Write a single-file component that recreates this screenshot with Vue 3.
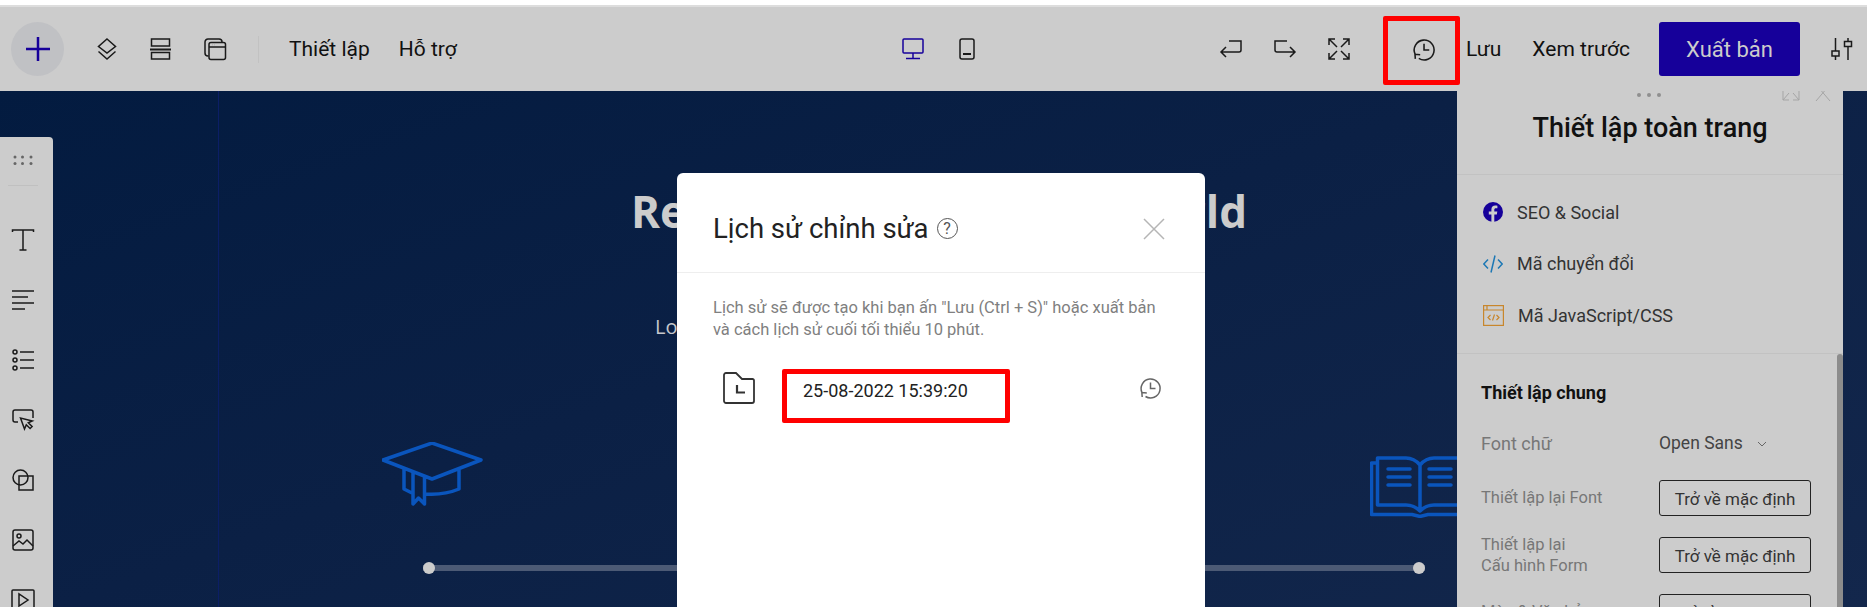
<template>
  <div class="page">
    <header class="toolbar">
      <button class="add-btn" aria-label="Thêm">
        <svg width="26" height="26" viewBox="0 0 26 26"><path d="M13 1v24M1 13h24" class="add-plus" /></svg>
      </button>
      <div class="tool-icons">
        <svg class="ico" viewBox="0 0 22 22"><path d="M11 1l8.500 7.500L11 15 2.500 8.500zM2.500 13.500L11 21l8.500-7.500" /></svg>
        <svg class="ico" viewBox="0 0 22 22"><rect x="1.500" y="1" width="18" height="7" /><path d="M0 11.500h21" stroke-width="2" /><rect x="1.500" y="14.500" width="18" height="6.500" /></svg>
        <svg class="ico" viewBox="0 0 22 22">
          <path d="M4.500 18H4a3 3 0 0 1-3-3V4a3 3 0 0 1 3-3h11a3 3 0 0 1 3 3v.5" />
          <rect x="5" y="4.500" width="16.500" height="17" rx="2" />
          <path d="M5 9h16.500M8 6.800h.1M10.500 6.800h.1" />
        </svg>
      </div>
      <span class="divider"></span>
      <nav class="menu">
        <a>Thiết lập</a>
        <a>Hỗ trợ</a>
      </nav>
      <div class="devices">
        <svg class="ico active" viewBox="0 0 22 22"><rect x="1" y="1" width="20" height="14" rx="1" /><path d="M11 15v5M4 20.500h14" /></svg>
        <svg class="ico tablet" viewBox="0 0 16 22"><rect x="1" y="1" width="14" height="20" rx="2" /><path d="M4 16h8" stroke-width="2" /></svg>
      </div>
      <div class="actions">
        <svg class="ico" viewBox="0 0 22 22"><path d="M9 3h12v9a2 2 0 0 1-2 2H1M6 9l-5 5 5 5" /></svg>
        <svg class="ico" viewBox="0 0 22 22"><path d="M13 3H1v9a2 2 0 0 0 2 2h18M16 9l5 5-5 5" /></svg>
        <svg class="ico" viewBox="0 0 22 22"><path d="M1 7V1h6M1 1l8 8M15 1h6v6M21 1l-8 8M1 15v6h6M1 21l8-8M15 21h6v-6M21 21l-8-8" /></svg>
        <svg class="ico history" viewBox="0 0 22 22"><path d="M3 15.500A9.500 9.500 0 1 1 6.500 19.500M2.800 15l.4 5M2.800 15.500l5 .5M11.500 5.500v6h5" /></svg>
        <a class="save">Lưu</a>
        <a class="preview">Xem trước</a>
        <button class="publish">Xuất bản</button>
        <svg class="ico sliders" viewBox="0 0 22 22"><path d="M4.500 0v13M4.500 18v4M17 0v3.500M17 8.500V22" /><rect x="1" y="13" width="7" height="5" /><rect x="13.500" y="3.500" width="7" height="5" /></svg>
      </div>
      <span class="mark mark-history"></span>
    </header>

    <main class="canvas">
      <span class="guide"></span>

      <section class="hero">
        <h1>Reasons to join the world</h1>
        <p>Lorem ipsum dolor sit amet, consectetur adipiscing elit</p>
        <div class="milestones">
          <svg class="cap" width="102" height="66" viewBox="0 0 102 66">
            <path d="M1 18L50 1l49 17-49 19zM22 27v20l8 4M31 30v32l5.500-6 6 6V35M77 27v20c-12 5-22 6-34 5" />
          </svg>
          <svg class="book" width="100" height="62" viewBox="0 0 100 62">
            <path d="M7 7H1.500v51.500H42l8 2 8-2h40.500V7H93" />
            <path d="M50 9Q44 2 36 2H7.500v47H36q8 0 14 6 6-6 14-6h28.500V2H64q-8 0-14 7zM50 9v46" />
            <path d="M18 13h22M18 21h22M18 29h22M59 13h22M59 21h22M59 29h22" />
          </svg>
        </div>
        <div class="timeline">
          <span class="dot"></span>
          <span class="dot"></span>
        </div>
      </section>

      <aside class="widgets">
        <svg class="grip" width="20" height="10" viewBox="0 0 20 10"><g fill="#666"><circle cx="2" cy="2" r="1.500" /><circle cx="9.500" cy="2" r="1.500" /><circle cx="18" cy="2" r="1.500" /><circle cx="2" cy="8.500" r="1.500" /><circle cx="9.500" cy="8.500" r="1.500" /><circle cx="18" cy="8.500" r="1.500" /></g></svg>
        <span class="widgets-line"></span>
        <div class="widget-list">
          <svg class="ico" viewBox="0 0 22 22"><path d="M.5 3V1h21v2M11 1v20M7.500 21h7" /></svg>
          <svg class="ico" viewBox="0 0 22 22"><path d="M0 2h22M0 8h16M0 14h22M0 20h13" /></svg>
          <svg class="ico" viewBox="0 0 22 22"><circle cx="3" cy="3" r="2" /><circle cx="3" cy="11" r="2" /><circle cx="3" cy="19" r="2" /><path d="M8 3h14M8 11h14M8 19h14" /></svg>
          <svg class="ico" viewBox="0 0 22 22"><path d="M6 13H3a2 2 0 0 1-2-2V3a2 2 0 0 1 2-2h16a2 2 0 0 1 2 2v6" /><path d="M8.500 9l4 11 1.800-4.200 3.800 3.700 2-2-3.800-3.700 4-1.800z" /></svg>
          <svg class="ico" viewBox="0 0 22 22"><circle cx="8.500" cy="8.500" r="7.500" /><rect x="7" y="7" width="14" height="14" /></svg>
          <svg class="ico" viewBox="0 0 22 22"><rect x="1" y="1" width="20" height="20" rx="2" /><circle cx="7" cy="7" r="2" /><path d="M1 17l6-5 4 3 4-4 6 6" /></svg>
          <svg class="ico video" viewBox="0 0 24 22"><rect x="1" y="1" width="22" height="20" rx="1" /><path d="M8 5v12l9-6z" /></svg>
        </div>
      </aside>

      <aside class="settings">
        <div class="settings-head">
          <svg class="settings-dots" width="24" height="4" viewBox="0 0 24 4"><g fill="#8f8f8f"><circle cx="2" cy="2" r="2" /><circle cx="12" cy="2" r="2" /><circle cx="22" cy="2" r="2" /></g></svg>
          <svg class="settings-collapse" width="18" height="10" viewBox="0 0 18 10"><path d="M1 0v9h6M1 9l6-7M17 0v9h-6M17 9l-6-7" /></svg>
          <svg class="settings-close" width="16" height="10" viewBox="0 0 16 10"><path d="M1 10L9.500 0M15 10L6.500 0" /></svg>
          <h2>Thiết lập toàn trang</h2>
        </div>
        <ul class="settings-links">
          <li>
            <svg width="20" height="20" viewBox="0 0 20 20"><circle cx="10" cy="10" r="10" fill="#16009a" /><path d="M11.300 20v-7.500h2.500l.5-3h-3V7.800c0-.9.400-1.500 1.600-1.500h1.500V3.700c-.5-.1-1.300-.2-2.200-.2-2.300 0-3.800 1.400-3.800 3.900v2.100H5.800v3h2.600V20z" fill="#ccc" /></svg>
            SEO &amp; Social
          </li>
          <li>
            <svg width="20" height="20" viewBox="0 0 20 20" fill="none" stroke="#1d78b5" stroke-width="1.500"><path d="M5 5.500L.8 10 5 14.500M15 5.500l4.200 4.500-4.200 4.500M12 1.500L8 18.500" /></svg>
            Mã chuyển đổi
          </li>
          <li>
            <svg width="21" height="21" viewBox="0 0 21 21" fill="none" stroke="#c8862c" stroke-width="1.200"><rect x=".6" y=".6" width="19.800" height="19.800" /><path d="M.6 5h19.800M4 .6V5M7.500 10l-2.500 2.500L7.500 15M13.500 10l2.500 2.500-2.500 2.500M11.500 9.500l-2 6" /></svg>
            Mã JavaScript/CSS
          </li>
        </ul>
        <section class="settings-general">
          <span class="scrollbar"></span>
          <h3>Thiết lập chung</h3>
          <div class="field field-font">
            <label>Font chữ</label>
            <div class="select">
              Open Sans
              <svg width="10" height="6" viewBox="0 0 10 6" fill="none" stroke="#666"><path d="M1 1l4 4 4-4" /></svg>
            </div>
          </div>
          <div class="field" v-for="row in resets" :key="row.id">
            <label>{{ row.first }}<br v-if="row.second" />{{ row.second }}</label>
            <button class="reset">{{ row.action }}</button>
          </div>
        </section>
      </aside>

      <div class="modal">
        <div class="modal-head">
          <h2>Lịch sử chỉnh sửa</h2>
          <span class="help">?</span>
          <svg class="modal-close" width="22" height="22" viewBox="0 0 22 22"><path d="M1 1l20 20M21 1L1 21" /></svg>
        </div>
        <div class="modal-body">
          <p>Lịch sử sẽ được tạo khi bạn ấn "Lưu (Ctrl + S)" hoặc xuất bản<br />và cách lịch sử cuối tối thiểu 10 phút.</p>
          <div class="version">
            <svg class="folder" width="32" height="32" viewBox="0 0 32 32"><path d="M1 3a2 2 0 0 1 2-2h10l6 6h10.500a1.500 1.500 0 0 1 1.500 1.500V29a2 2 0 0 1-2 2H3a2 2 0 0 1-2-2z" /><path d="M14 13v7.500h8" stroke-width="2.200" /></svg>
            <span class="version-date">25-08-2022 15:39:20</span>
            <svg class="ico restore" viewBox="0 0 22 22"><path d="M3 15.500A9.500 9.500 0 1 1 6.500 19.500M2.800 15l.4 5M2.800 15.500l5 .5M11.500 5.500v6h5" /></svg>
          </div>
        </div>
      </div>
    </main>
  </div>
</template>

<script setup>
const resets = [
  { id: 1, first: 'Thiết lập lại Font', second: '', action: 'Trở về mặc định' },
  { id: 2, first: 'Thiết lập lại', second: 'Cấu hình Form', action: 'Trở về mặc định' },
  { id: 3, first: 'Màu & Văn bản', second: '', action: 'Trở về mặc định' },
];
</script>

<style>
html,
body {
  margin: 0;
  background: #fff;
  overflow: hidden;
}
</style>

<style scoped>
.page {
  height: 607px;
  overflow: hidden;
  display: flex;
  flex-direction: column;
  padding-top: 5px;
  box-sizing: border-box;
  font-family: Roboto, "Noto Sans", sans-serif;
  color: #111;
}

/* top bar */
.toolbar {
  position: relative;
  height: 86px;
  flex: none;
  box-sizing: border-box;
  display: flex;
  align-items: center;
  padding-left: 11px;
  background: #ccc;
  border-top: 2px solid #ddd;
}
.ico {
  width: 22px;
  height: 22px;
  flex: none;
  fill: none;
  stroke: #1a1a1a;
  stroke-width: 1.5;
  overflow: visible;
}
.add-btn {
  width: 53px;
  height: 54px;
  border: 0;
  padding: 0;
  border-radius: 50%;
  background: #c0c1c4;
  display: flex;
  align-items: center;
  justify-content: center;
}
.add-plus {
  stroke: #16009a;
  stroke-width: 2.5;
}
.tool-icons {
  display: flex;
  gap: 32px;
  margin-left: 32px;
}
.divider {
  width: 1px;
  height: 27px;
  background: #c2c2c2;
  margin-left: 32px;
}
.menu {
  display: flex;
  gap: 29px;
  margin-left: 30px;
  font-size: 21px;
}
.devices {
  display: flex;
  gap: 35px;
  align-items: center;
  margin-left: 445px;
}
.active {
  stroke: #16009a;
}
.tablet {
  width: 16px;
}
.actions {
  display: flex;
  align-items: center;
  margin-left: auto;
  padding-right: 14px;
  font-size: 21px;
}
.actions .ico + .ico {
  margin-left: 32px;
}
.actions .ico.history {
  width: 23px;
  height: 23px;
  margin-left: 62px;
}
.save {
  margin-left: 31px;
}
.preview {
  margin-left: 31px;
}
.publish {
  width: 141px;
  height: 54px;
  margin-left: 29px;
  border: 0;
  border-radius: 3px;
  background: #16009a;
  color: #ccc;
  font: 22px Roboto, sans-serif;
}
.actions .sliders {
  margin-left: 31px;
}
.mark {
  position: absolute;
  box-sizing: border-box;
  border: 5px solid #f00;
  border-radius: 2px;
}
.mark-history {
  left: 1383px;
  top: 9px;
  width: 77px;
  height: 69px;
}

/* page canvas */
.canvas {
  position: relative;
  flex: 1;
  min-height: 0;
  overflow: hidden;
  background: linear-gradient(160deg, #031b40 0%, #0b2045 45%, #13274c 100%);
}
.guide {
  position: absolute;
  left: 218px;
  top: 0;
  bottom: 0;
  width: 1px;
  background: #0b1e66;
}
.hero {
  padding-top: 90px;
}
.hero h1 {
  width: 616px;
  height: 60px;
  margin: 0 0 0 631px;
  font: 700 44px/60px "Open Sans", sans-serif;
  color: #ccc;
  text-align: justify;
  text-align-last: justify;
}
.hero p {
  margin: 74px 0 0 655px;
  font: 20px/24px "Open Sans", sans-serif;
  color: #c6c8cc;
  white-space: nowrap;
}
.milestones {
  display: flex;
  justify-content: space-between;
  align-items: flex-start;
  width: 1088px;
  height: 66px;
  margin: 103px 0 0 382px;
}
.milestones svg {
  fill: none;
  stroke: #0a55bd;
  stroke-width: 3.5;
  stroke-linejoin: round;
  stroke-linecap: round;
}
.book {
  margin-top: 14px;
}
.timeline {
  display: flex;
  justify-content: space-between;
  align-items: center;
  width: 1002px;
  height: 6px;
  margin: 57px 0 0 423px;
  background: #4c5a75;
}
.dot {
  width: 12px;
  height: 12px;
  border-radius: 50%;
  background: #ccc;
}

/* left widget rail */
.widgets {
  position: absolute;
  left: 0;
  top: 46px;
  bottom: 0;
  width: 53px;
  display: flex;
  flex-direction: column;
  align-items: center;
  padding: 18px 7px 0 0;
  box-sizing: border-box;
  background: #ccc;
  border-top-right-radius: 4px;
}
.widgets > * {
  flex: none;
}
.widgets-line {
  width: 30px;
  height: 1px;
  margin-top: 20px;
  background: #c0c0c0;
}
.widget-list {
  display: flex;
  flex-direction: column;
  gap: 38px;
  margin-top: 43px;
}
.widget-list .video {
  width: 24px;
  margin-left: -1px;
}

/* right settings panel */
.settings {
  position: absolute;
  left: 1457px;
  top: 0;
  bottom: 0;
  width: 386px;
  background: #ccc;
}
.settings-head {
  position: relative;
  height: 84px;
  box-sizing: border-box;
  border-bottom: 1px solid #c2c2c2;
  text-align: center;
}
.settings-dots {
  position: absolute;
  left: 180px;
  top: 2px;
}
.settings-collapse,
.settings-close {
  position: absolute;
  top: 0;
  fill: none;
  stroke: #a5a5a5;
}
.settings-collapse {
  left: 325px;
}
.settings-close {
  left: 358px;
}
.settings-head h2 {
  margin: 0;
  padding-top: 21px;
  font-size: 27px;
  line-height: 32px;
  font-weight: 500;
  color: #111;
}
.settings-links {
  list-style: none;
  margin: 0;
  padding: 11.5px 0 11.5px 26px;
  border-bottom: 1px solid #c2c2c2;
}
.settings-links li {
  display: flex;
  align-items: center;
  gap: 14px;
  height: 51.5px;
  font-size: 18px;
  color: #333;
}
.settings-general {
  position: relative;
  height: 400px;
  padding: 27px 0 0 24px;
}
.scrollbar {
  position: absolute;
  right: 0;
  top: 0;
  bottom: 0;
  width: 6px;
  border-radius: 3px 3px 0 0;
  background: #8c8c8c;
}
.settings-general h3 {
  margin: 0 0 21px;
  font-size: 18px;
  line-height: 24px;
  font-weight: 700;
  color: #111;
}
.field {
  display: grid;
  grid-template-columns: 178px 152px;
  grid-template-rows: 36px;
  align-items: center;
  margin-bottom: 21px;
  font-size: 16.5px;
  line-height: 21px;
  color: #777;
}
.field-font {
  margin-bottom: 18px;
  font-size: 18px;
}
.select {
  display: flex;
  align-items: center;
  gap: 14px;
  font-size: 17.5px;
  color: #444;
}
.reset {
  height: 36px;
  box-sizing: border-box;
  padding: 2px 0 0;
  border: 1px solid #222;
  border-radius: 3px;
  background: transparent;
  color: #333;
  font: 17px Roboto, sans-serif;
}

/* history dialog */
.modal {
  position: absolute;
  left: 677px;
  top: 82px;
  width: 528px;
  height: 440px;
  border-radius: 6px;
  background: #fff;
}
.modal-head {
  position: relative;
  display: flex;
  align-items: center;
  gap: 8px;
  height: 100px;
  box-sizing: border-box;
  padding: 12px 0 0 36px;
  border-bottom: 1px solid #eee;
}
.modal-head h2 {
  margin: 0;
  font-size: 27.5px;
  font-weight: 400;
  color: #222;
}
.help {
  width: 21px;
  height: 21px;
  box-sizing: border-box;
  border: 1px solid #555;
  border-radius: 50%;
  text-align: center;
  font-size: 16px;
  line-height: 19px;
  color: #555;
}
.modal-close {
  position: absolute;
  left: 466px;
  top: 45px;
  fill: none;
  stroke: #b5b5b5;
  stroke-width: 1.500;
}
.modal-body {
  padding: 24px 36px 0;
}
.modal-body p {
  margin: 0;
  font-size: 16.5px;
  line-height: 22px;
  color: #808080;
  white-space: nowrap;
}
.version {
  display: flex;
  align-items: flex-start;
  margin: 28px 8px 0 10px;
}
.folder {
  margin-top: 3px;
  fill: none;
  stroke: #333;
  stroke-width: 1.800;
}
.version-date {
  width: 228px;
  height: 54px;
  box-sizing: border-box;
  margin-left: 27px;
  padding: 5px 0 0 16px;
  border: 5px solid #f00;
  border-radius: 2px;
  font-size: 18px;
  line-height: 24px;
  color: #222;
}
.restore {
  margin: 8px 0 0 auto;
  stroke: #666;
}
</style>
